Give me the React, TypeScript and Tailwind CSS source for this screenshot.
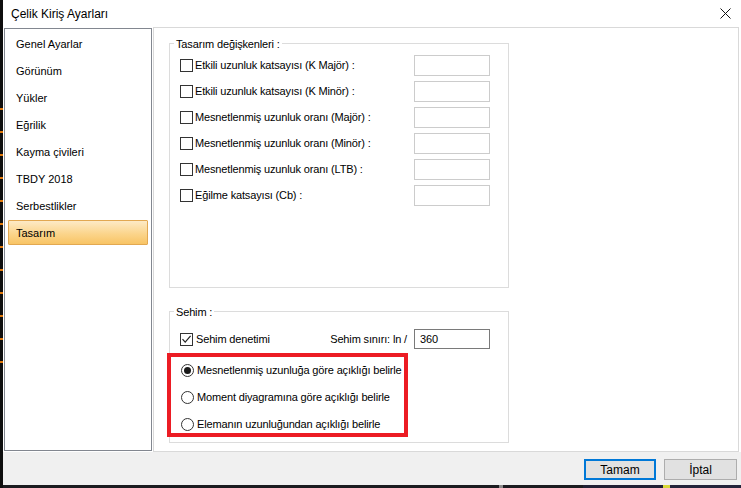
import React from "react";

function CheckBox({ checked }: { checked?: boolean }) {
  return (
    <span className="w-[13px] h-[13px] border border-[#333333] bg-white flex items-center justify-center shrink-0">
      {checked && (
        <svg width="11" height="11" viewBox="0 0 11 11">
          <path d="M1.5 5.2 L4.2 8.2 L9.6 1.8" stroke="#222" strokeWidth="1.2" fill="none" />
        </svg>
      )}
    </span>
  );
}

function Radio({ selected }: { selected?: boolean }) {
  return (
    <span className="w-[13px] h-[13px] rounded-full border border-[#333333] bg-white flex items-center justify-center shrink-0">
      {selected && <span className="w-[7px] h-[7px] rounded-full bg-[#1a1a1a]" />}
    </span>
  );
}

const navItems = [
  "Genel Ayarlar",
  "Görünüm",
  "Yükler",
  "Eğrilik",
  "Kayma çivileri",
  "TBDY 2018",
  "Serbestlikler",
  "Tasarım",
];

const rows = [
  "Etkili uzunluk katsayısı (K Majör) :",
  "Etkili uzunluk katsayısı (K Minör) :",
  "Mesnetlenmiş uzunluk oranı (Majör) :",
  "Mesnetlenmiş uzunluk oranı (Minör) :",
  "Mesnetlenmiş uzunluk oranı (LTB) :",
  "Eğilme katsayısı (Cb) :",
];

const radios = [
  "Mesnetlenmiş uzunluğa göre açıklığı belirle",
  "Moment diyagramına göre açıklığı belirle",
  "Elemanın uzunluğundan açıklığı belirle",
];

const ticks = Array.from({ length: 12 });

export default function App() {
  return (
    <div className="w-[741px] h-[488px] flex bg-[#141414] font-['Liberation_Sans',Arial,sans-serif] text-black overflow-hidden">
      {/* left background strip */}
      <div className="w-[3px] h-full bg-[#0e0e0e] flex flex-col pt-[108px] gap-[21px] shrink-0">
        {ticks.map((_, i) => (
          <span key={i} className="w-[3px] h-[2px] bg-[#e0780a]" />
        ))}
      </div>

      <div className="flex flex-col w-[738px] h-full">
        {/* dialog */}
        <div className="h-[485px] flex flex-col bg-[#f0f0f0]">
          {/* title bar */}
          <div className="h-[27px] bg-white flex items-center pl-[8px] pr-[10px] shrink-0">
            <span className="text-[12px] leading-[14px] pt-[1px]">Çelik Kiriş Ayarları</span>
            <svg className="ml-auto" width="11" height="11" viewBox="0 0 11 11">
              <path d="M0.5 0.5 L10.5 10.5 M10.5 0.5 L0.5 10.5" stroke="#111" strokeWidth="1" />
            </svg>
          </div>

          {/* body */}
          <div className="flex h-[425px] bg-white">
            {/* nav */}
            <div className="ml-[1px] mt-[1px] w-[148px] h-[423px] border border-[#828790] bg-white pt-[2px] px-[3px] flex flex-col gap-[2px]">
              {navItems.map((n, i) => {
                const sel = i === navItems.length - 1;
                return (
                  <div
                    key={n}
                    className={
                      sel
                        ? "h-[25px] flex items-center pl-[7px] pt-[2px] text-[11px] border border-[#e2a851] bg-[linear-gradient(#fdeac6,#fbd58c_55%,#f8c465)] rounded-[1px]"
                        : "h-[25px] flex items-center pl-[7px] pt-[2px] text-[11px] border border-transparent"
                    }
                  >
                    {n}
                  </div>
                );
              })}
            </div>

            {/* right panel */}
            <div className="ml-[1px] w-[586px] h-[425px] border border-[#d9d9d9] bg-white pt-[15px] pl-[15px] flex flex-col text-[11px] tracking-[-0.15px] whitespace-nowrap">
              {/* group 1 */}
              <div className="relative border border-[#dcdcdc] w-[340px] h-[245px] pt-[11px] pl-[10px] pr-[18px] flex flex-col gap-[5px]">
                <span className="absolute -top-[7px] left-[4px] bg-white px-[2px] leading-[14px]">
                  Tasarım değişkenleri :
                </span>
                {rows.map((r) => (
                  <div key={r} className="flex items-center h-[21px]">
                    <CheckBox />
                    <span className="ml-[2px]">{r}</span>
                    <span className="ml-auto w-[76px] h-[21px] border border-[#cccccc] bg-white" />
                  </div>
                ))}
              </div>

              {/* group 2 */}
              <div className="relative mt-[23px] border border-[#dcdcdc] w-[340px] h-[132px] pt-[17px] pl-[10px] pr-[18px] flex flex-col">
                <span className="absolute -top-[7px] left-[4px] bg-white px-[2px] leading-[14px]">Sehim :</span>
                <div className="flex items-center h-[20px]">
                  <CheckBox checked />
                  <span className="ml-[3px]">Sehim denetimi</span>
                  <span className="ml-auto mr-[7px]">Sehim sınırı: ln /</span>
                  <span className="w-[76px] h-[20px] border border-[#7a7a7a] bg-white flex items-center pl-[5px]">360</span>
                </div>
                <div className="-ml-[13px] mt-[4px] w-[241px] h-[84px] border-4 border-[#ec1c24] pt-[2px] pl-[10px] flex flex-col gap-[5px]">
                  {radios.map((r, i) => (
                    <div key={r} className="flex items-center h-[22px] shrink-0">
                      <Radio selected={i === 0} />
                      <span className="ml-[3px]">{r}</span>
                    </div>
                  ))}
                </div>
              </div>
            </div>
          </div>

          {/* bottom button bar */}
          <div className="h-[33px] bg-[#f0f0f0] flex justify-end items-start pt-[7px] pr-[4px] gap-[8px]">
            <button className="w-[72px] h-[21px] border-2 border-[#0078d7] bg-[#e1e1e1] text-[12px] leading-[14px] flex items-center justify-center">
              Tamam
            </button>
            <button className="w-[73px] h-[21px] border border-[#adadad] bg-[#e1e1e1] text-[12px] leading-[14px] flex items-center justify-center">
              İptal
            </button>
          </div>
        </div>

        {/* bottom background strip */}
        <div className="h-[3px] flex bg-[#1b1b1f]">
          <span className="w-[496px]" />
          <span className="w-[4px] bg-[#8a8a8a]" />
          <span className="w-[80px]" />
          <span className="w-[80px] bg-[#202034]" />
          <span className="w-[7px] bg-[#d8d838]" />
          <span className="flex-1 bg-[#23233a]" />
        </div>
      </div>
    </div>
  );
}
